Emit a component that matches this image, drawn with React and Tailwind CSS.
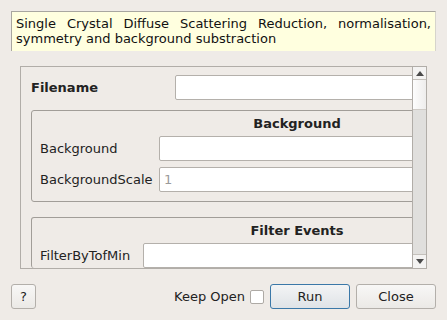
import React from 'react';

const Field = ({ placeholder = '' }) => (
  <div className="flex-1 h-[25px] bg-white border border-[#b4b0ab] rounded-[2px] flex items-center pl-[4px] text-[#9a9a9a]">
    {placeholder}
  </div>
);

const Group = ({ title, labelW, rows, bottom = true }) => (
  <div
    className="border border-[#a19d98] rounded-[3px] pb-[9px]"
    style={bottom ? {} : { borderBottom: 'none', paddingBottom: 0 }}
  >
    <div className="h-[24px] flex items-center justify-center font-bold">{title}</div>
    <div className="flex flex-col gap-[6px] mt-[1px] pl-[8px]">
      {rows.map((r) => (
        <div key={r.label} className="flex items-center">
          <div style={{ width: labelW }} className="shrink-0">{r.label}</div>
          <Field placeholder={r.placeholder} />
        </div>
      ))}
    </div>
  </div>
);

const Button = ({ children, className = '', primary }) => (
  <div
    className={`h-[25px] rounded-[3px] border flex items-center justify-center ${
      primary
        ? 'border-[#3b78a8] bg-gradient-to-b from-[#f3f4f5] to-[#dfe3e7]'
        : 'border-[#b3afaa] bg-gradient-to-b from-[#f8f7f6] to-[#ebe9e6]'
    } ${className}`}
  >
    {children}
  </div>
);

export default function App() {
  return (
    <div className="w-[447px] h-[320px] bg-[#efebe7] text-[13px] text-[#222] overflow-hidden font-['DejaVu_Sans',sans-serif] leading-[15px]">
      {/* description */}
      <div className="pt-[11px] px-[11px]">
        <div className="h-[40px] bg-[#ffffdf] border-t border-l border-[#a8a6a0] border-r border-r-[#d6d4cc] px-[4px] pt-[4px] text-justify [text-align-last:left] text-[#111]">
          Single Crystal Diffuse Scattering Reduction, normalisation, symmetry and background substraction
        </div>
      </div>

      {/* scroll area */}
      <div className="ml-[20px] mt-[15px] w-[407px] h-[203px] border border-[#b1ada8] flex">
        <div className="w-[391px] h-full overflow-hidden">
          <div className="w-[542px] pl-[10px] pt-[8px]">
            <div className="flex items-center">
              <div className="w-[144px] shrink-0 font-bold">Filename</div>
              <Field />
            </div>
            <div className="mt-[10px]">
              <Group
                title="Background"
                labelW="119px"
                rows={[
                  { label: 'Background' },
                  { label: 'BackgroundScale', placeholder: '1' },
                ]}
              />
            </div>
            <div className="mt-[15px]">
              <Group
                title="Filter Events"
                labelW="103px"
                bottom={false}
                rows={[{ label: 'FilterByTofMin' }]}
              />
            </div>
          </div>
        </div>
        {/* scrollbar */}
        <div className="w-[14px] h-full border-l border-[#b1ada8] flex flex-col bg-[#e0dfdd]">
          <div className="h-[13px] bg-[#f4f3f2] border-b border-[#c4c0bb] flex items-center justify-center">
            <svg width="8" height="5" viewBox="0 0 8 5"><path d="M4 0L8 5H0z" fill="#4a4a4a" /></svg>
          </div>
          <div className="h-[30px] bg-gradient-to-r from-[#fdfdfd] to-[#eeedec] border-b border-[#cfcbc6]" />
          <div className="flex-1" />
          <div className="h-[14px] bg-[#f4f3f2] border-t border-[#c4c0bb] flex items-center justify-center">
            <svg width="8" height="5" viewBox="0 0 8 5"><path d="M0 0H8L4 5z" fill="#4a4a4a" /></svg>
          </div>
        </div>
      </div>

      {/* buttons */}
      <div className="flex items-center mt-[15px] px-[11px]">
        <Button className="w-[25px]">?</Button>
        <div className="flex-1" />
        <span className="mr-[5px]">Keep Open</span>
        <div className="w-[14px] h-[14px] bg-white border border-[#aeaaa5] rounded-[2px] mr-[6px]" />
        <Button primary className="w-[80px]">Run</Button>
        <Button className="w-[80px] ml-[6px]">Close</Button>
      </div>
    </div>
  );
}
